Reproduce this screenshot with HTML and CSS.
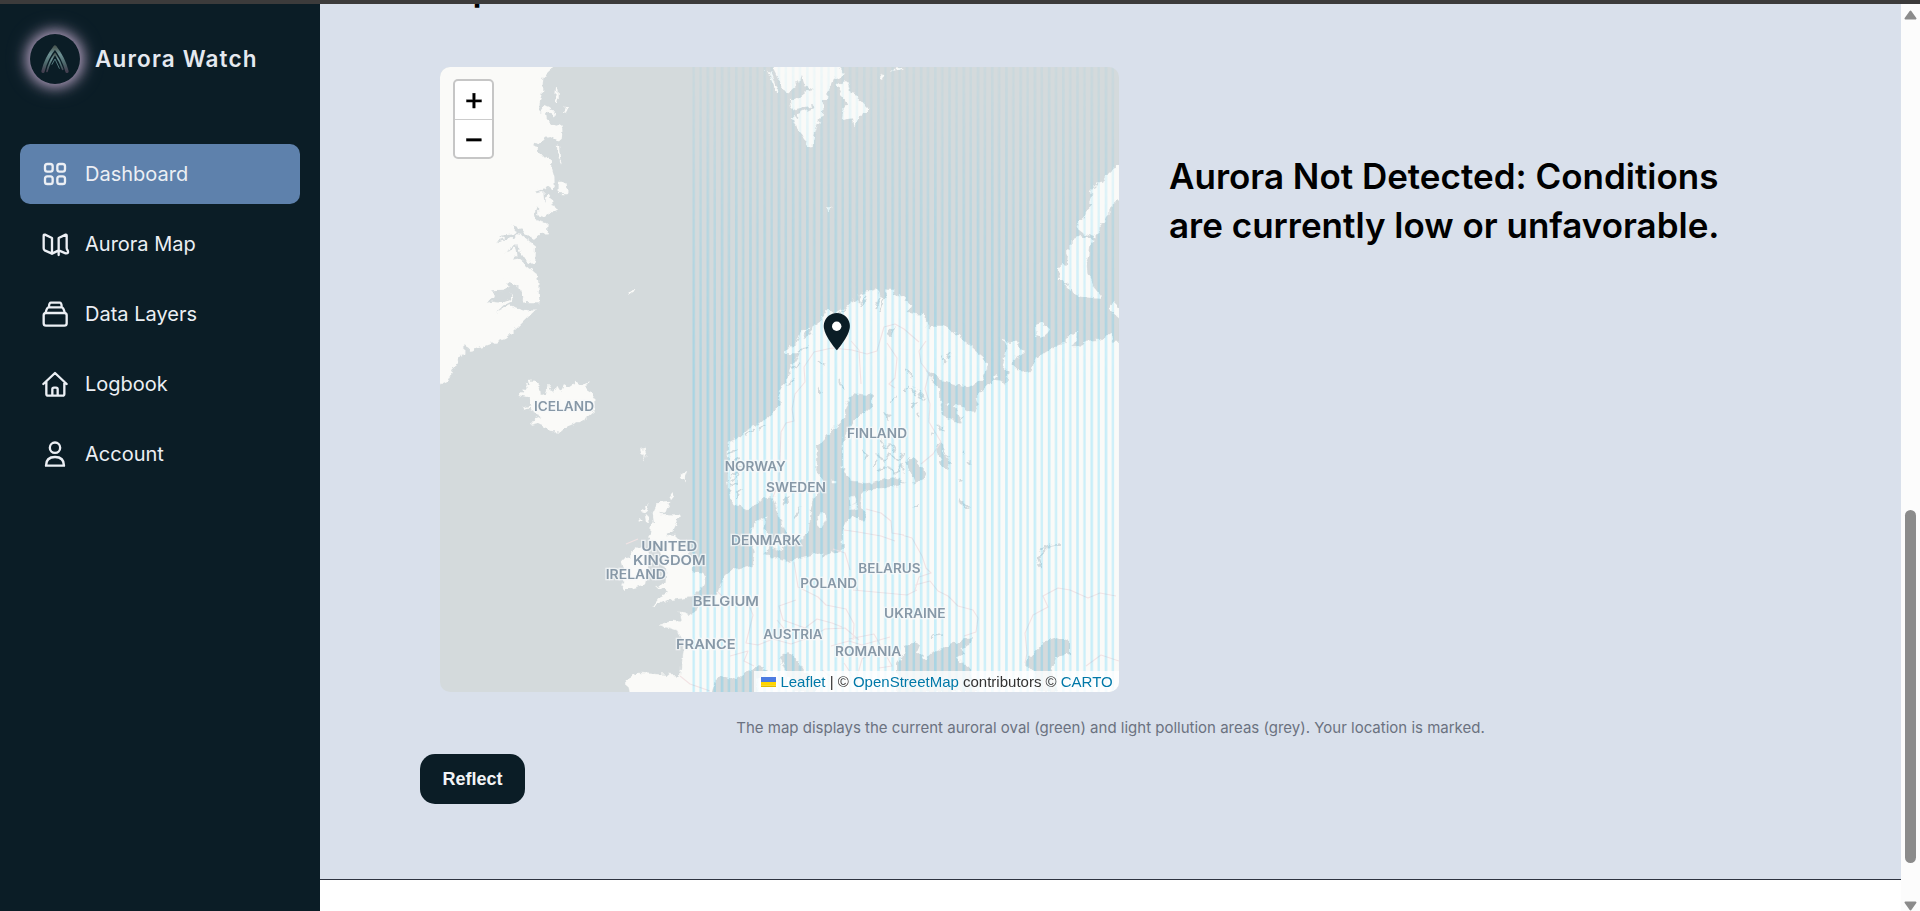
FILE: index.html
```html
<!DOCTYPE html>
<html lang="en">
<head>
<meta charset="utf-8">
<title>Aurora Watch</title>
<link rel="stylesheet" href="styles.css">
</head>
<body>
<div class="topbar"></div>
<div class="app">
  <aside class="sidebar">
    <div class="brand">
      <div class="logo">
        <svg viewBox="0 0 150 150" fill="none" stroke-linecap="round" stroke-linejoin="round">
          <defs><linearGradient id="lg" x1="0" y1="0" x2="0" y2="1"><stop offset="0" stop-color="#4c5a55"/><stop offset=".3" stop-color="#6e9295"/><stop offset=".65" stop-color="#4e6a6c"/><stop offset="1" stop-color="#443f50"/></linearGradient></defs>
          <path d="M39 112Q48 73 75 39Q101 73 111 112" stroke="url(#lg)" stroke-width="10"/>
          <path d="M51 112Q58 84 75 59Q90 82 98 106" stroke="url(#lg)" stroke-width="5"/>
          <path d="M66 91L75 75L88 103" stroke="#53777c" stroke-width="3"/>
        </svg>
      </div>
      <span class="brand-name">Aurora Watch</span>
    </div>
    <nav class="nav">
      <a class="item active"><svg class="icon" viewBox="0 0 90 90"><rect x="15" y="15" width="23" height="23" rx="7"/><rect x="52" y="15" width="23" height="23" rx="7"/><rect x="15" y="52" width="23" height="23" rx="7"/><rect x="52" y="52" width="23" height="23" rx="7"/></svg>Dashboard</a>
      <a class="item"><svg class="icon" viewBox="0 0 90 90"><path d="M15 17L36 27V74L14 64Q11 62 11 58V20Q11 16 15 17ZM36 74L56 64M56 78V27L77 17Q80 16 80 20V57Q80 61 83 64Q87 74 77 73L56 64"/></svg>Aurora Map</a>
      <a class="item"><svg class="icon" viewBox="0 0 90 90"><rect x="11" y="42" width="69" height="38" rx="7"/><path d="M17 41Q20 26 26 25H65Q71 26 74 41M27 25Q27 11 33 11H59Q65 11 65 25"/></svg>Data Layers</a>
      <a class="item"><svg class="icon" viewBox="0 0 90 90"><path d="M10 45L45 12L80 45M19 38V75Q19 80 24 80H68Q73 80 73 75V38M37 80V61Q37 56 42 56H48Q53 56 53 61V80"/></svg>Logbook</a>
      <a class="item"><svg class="icon" viewBox="0 0 90 90"><circle cx="45" cy="26" r="15.500"/><path d="M18 80C18 61 29 54 45 54S72 61 72 80Z"/></svg>Account</a>
    </nav>
  </aside>
  <main class="page">
    <section class="content">
      <h2 class="section-title">Map</h2>
      <div class="row">
        <div class="map">
          <svg class="tiles" viewBox="440 67 679 625">
            <defs>
              <pattern id="st" x="692.3" y="0" width="14.22" height="10" patternUnits="userSpaceOnUse"><rect x="0" width="2.6" height="10" fill="#00bfff" fill-opacity=".2"/><rect x="7.1" width="2.3" height="10" fill="#00bfff" fill-opacity=".19"/></pattern>
              <linearGradient id="fade" x1="0" y1="0" x2="0" y2="1"><stop offset="0" stop-color="#fff" stop-opacity=".22"/><stop offset=".25" stop-color="#fff" stop-opacity=".65"/><stop offset=".5" stop-color="#fff"/></linearGradient>
              <mask id="fm" maskUnits="userSpaceOnUse" x="440" y="67" width="679" height="625"><rect x="440" y="67" width="679" height="625" fill="url(#fade)"/></mask>
              <filter id="coast" filterUnits="userSpaceOnUse" x="425" y="55" width="710" height="650" color-interpolation-filters="sRGB"><feTurbulence type="fractalNoise" baseFrequency=".16" numOctaves="2" seed="4" result="n"/><feDisplacementMap in="SourceGraphic" in2="n" scale="7" xChannelSelector="R" yChannelSelector="G"/></filter>
            </defs>
            <rect x="440" y="67" width="679" height="625" fill="#d4dadc"/>
            <g class="land" filter="url(#coast)">
              <g transform="translate(430 0) scale(.33333)">
                <path d="M0 170H365V201L360 213L350 217L340 235L335 280L325 335L330 338L345 315L360 322L375 340L374 347L360 338L348 342L350 360L370 378L382 380L393 376L397 390L395 420L385 424L362 411L345 413L325 433L310 424L306 435L322 445L330 468L345 470L362 480L364 497L373 530L374 560L368 568L353 556L343 568L330 572L316 574L320 580L340 576L343 606L352 582L362 588L368 612L377 628L372 640L358 638L340 650L322 645L321 618L312 645L315 660L353 670L350 700L330 702L312 716L285 702L270 683L244 674L262 694L255 703L205 707L228 717L201 726L216 726L260 706L280 708L318 740L316 780L312 796L270 765L262 732L222 756L258 742L262 768L250 779L266 776L320 822L324 840L328 907L285 906L272 890L265 860L245 845L208 834L235 842L242 862L218 872L183 874L195 884L170 908L190 905L214 909L244 896L243 880L250 900L222 914L200 935L238 916L285 930L314 932L280 965L240 1005L222 1018L160 1040L120 1050L100 1035L100 1060L75 1100L55 1140L30 1152L0 1160Z"/>
                <path d="M378 262Q384 256 383 300Q380 314 376 300ZM405 320L411 322L405 341L399 340ZM381 435L387 434L391 490L384 480ZM386 550L403 546L406 567L415 572L415 580L386 579ZM594 884L600 870L617 862L618 868Z"/>
              </g>
              <g transform="translate(760 50) scale(.33333)">
                <path d="M38 51L30 25H230L235 51L254 75L218 90L203 125L201 150L192 150L188 200L178 205L160 270L158 291L150 292L125 255L108 235L96 205L105 198L114 210L115 190L160 170L158 165L105 178L93 172L90 150L105 150L135 127L160 120L135 105L125 75L120 100L105 90L108 110L85 130L72 120ZM22 60L30 62L56 128L50 130ZM230 103L262 93L272 130L298 135L296 150L310 165L327 178L310 190L300 210L280 228L276 205L246 210L250 180L262 165ZM361 68L372 84L366 86ZM393 65L410 52L431 58L415 64L408 60ZM199 469H211L207 480H202Z"/>
                <path d="M1110 335L1077 348Q1045 355 1028 398L1015 400L1008 412L990 416L992 430L1000 430L985 462L995 465L980 480L975 500L945 530L970 550L1005 562L1022 538L1020 520L1030 518L1038 500L1048 497L1048 475L1077 450L1110 430ZM960 558L1002 570L990 590L988 615L980 640L982 670L1000 710L1025 740L1023 746L960 740L940 732L925 700L910 690L897 690L894 655L905 645L920 648L924 620L918 605L935 590L935 570ZM912 698L932 712L928 720ZM1048 765L1058 758L1077 778L1100 790V815L1077 805L1045 775ZM845 817L870 838L862 850L845 864L830 858L828 825Z"/>
              </g>
              <g transform="translate(430 340) scale(.33333)">
                <path d="M265 168L280 155L278 145L292 148L285 132L300 135L296 122H315L331 145L332 168L350 165L356 137L370 158L382 138L392 155L402 136L420 145L435 135L436 118L458 134L476 124L465 145L482 155L496 175V212L470 235L445 245L410 260L392 275L360 272L345 262L320 250L302 254L318 235L335 228L305 216L300 205L276 210L275 203L310 195L295 175Z"/>
                <path d="M628 330L652 326L640 345L648 350L632 342ZM640 347L645 362L640 363ZM771 393L765 410L764 430L755 415L752 404ZM716 470L724 457L730 468L720 480ZM655 492L650 510L636 522L645 500ZM644 524L662 542L648 542ZM628 530L635 540L630 546Z"/>
                <path d="M682 490L722 486L715 505L690 522L745 524L749 532L730 570L708 585L735 588L770 625L790 660L788 695L820 702L825 725L815 745L800 760L785 772L740 778L712 780L692 790L668 800L690 770L718 755L676 740L710 725L712 690L700 670L690 630L680 610L655 590L665 575L658 568L672 545L668 520ZM603 635L625 618L655 628L662 660L652 700L645 733L620 740L580 752L568 735L582 728L570 710L582 695L572 660L600 655Z"/>
              </g>
              <path d="M728 453V443L740 437L747 430L763 422L775 410L780 403L779 390L785 385L790 370L800 353L785 353L790 347L797 343L801 332L807 328L803 340L809 335L812 327L820 322L828 308L833 313L847 308L852 300L860 303L859 295L870 292L877 288L880 295L884 300L887 290L893 290L893 294L900 296L912 305L907 313L922 315L927 320L926 326L931 329L932 326H943L953 332L967 343L983 357L987 368L982 380L967 387L955 385L943 381L925 368L930 378L940 388V403L943 415L952 420L960 424L963 418L953 407L957 403L965 410L975 413L979 407L976 397L983 390L993 380L1002 381L1006 387L1008 372L1003 365L1007 350L1006 343L1001 340L1008 342L1017 342L1024 353L1015 357L1012 363L1022 373L1032 371L1034 360L1045 353L1057 345L1065 343L1065 338L1072 335L1078 333L1076 340L1072 346L1082 347L1086 341L1100 340L1112 333L1113 343H1132V702H630L627 679L638 673L680 676L683 657L685 643L677 630L660 625L672 621L682 622L680 612L693 615L697 605L717 595L723 578L733 570L753 565L755 553L750 540L753 525L767 516L765 530L770 535L766 541L768 550L763 553L787 562L800 558L823 552V557L843 550V530L847 520L858 517L865 523L867 510L860 507L862 493L887 488L907 483L893 477L867 483L850 480L843 467V440L853 422L872 405V395L853 393L845 407V417L830 432L817 447L815 470L825 483L812 500L808 533L797 543L790 540L783 527L777 510L773 497L763 498L747 510L732 503L728 480Z"/>
              <path d="M772 540L782 535L786 543L780 551L773 548ZM816 523L821 512L827 517L820 529ZM849 498L855 496L857 502L851 506ZM849 507L858 503L855 511ZM832 480H836V483H832Z"/>
              <circle cx="946.500" cy="404" r="1.500"/><circle cx="996" cy="376" r="1.500"/>
            </g>
            <g class="water" filter="url(#coast)">
              <path d="M713 702V692L716 680L722 676L736 680L745 674L755 667L768 669L756 680L758 692V702ZM780 657L788 652L795 657L803 670L816 680V692H794ZM897 692V664L903 655L905 646L912 643L920 645L917 652L927 660L930 654L942 649L955 643L971 638L969 645L961 648L964 654L956 658L970 668L976 692ZM1025 663L1043 643L1057 638L1070 642L1070 654L1056 657L1052 672L1058 692H1040L1035 674ZM905 462L912 457L927 473L924 480L915 484L911 473ZM936 447L942 443L943 451L951 464L948 470L942 466L938 456ZM931 433L934 431L932 435ZM959 499L966 503L970 508L966 511ZM886 334L896 325L891 336ZM911 386L915 388L914 387ZM916 390L925 397L920 396ZM817 385L823 394L819 393ZM883 413L892 416L887 420ZM781 500L790 497L785 505ZM913 507L918 504V508ZM957 480L963 480L961 482ZM958 500L969 510L968 508ZM793 515L801 505L795 520Z"/>
            </g>
            <g class="streams" filter="url(#coast)">
              <path d="M880 440l6 8 4-5 5 9m-18 3l8 5 4-6 9 6 6-8m-25 18l10-4 5 8 8-9 3 8M862 450l6 5-3 6m7 6l5-6M906 393l3-7m2 3l4 6m3 1l7 4m-35 2l5-5m10-28l8 8m30-19l3 5m-6-7l2 4m5-2l3-5M911 406l8-2m-1 9l2 3M937 425l7 7-2-5m-5 17l8 6 3 7m-8-8l5 9m18-7l2 3m2 8l4 4M1060 544l-10 2-13 12 4 11m-1-19l10-6M930 640l4-5 8-1m-104-318l8-7m14-5l7-8m13 1l-4 11m9-12l-5 15m-63 49l8 6m14 15l5 8M731 463l8-5m-9 18l9-4m-9 14l8-4m21-53l8-5m4-12l9-7M728 455l10-5m-8 20l12-3m-12 15l10-8m-5 24l6-10m5-54l8-4m3-8l10-4M787 385l7-5m-2-12l8-5M798 352l10-6m-4-8l8-5M865 300l-4 8"/>
            </g>
            <g class="borders">
              <path d="M773 497l6-15 2-50 5-9 8-2-2-12 3-15 10-12-1-15 10-15 18-4 20 2 15 4 10-3 7-24 11-3 9 5 15 13m-32 1l10 15-2 20-6 6 6 4m31-47l-7 10 2 12 8 10-4 16 5 15-1 18 12 20-8 12-12 10M851 341l8 9 2 34M866 509l15 4 10 8 1 12 12 2m-60-5l14 2 23 4 14 5m7-6l10 3 10 18 4 12 5 5-12 4-4 13m-57 0l-7-11m2 11l54 5 10-5m-67-20l-5-17-12-4M794 562l4 25 20 10 8 8 20 4 8 15-1 16M796 600l-17 6 4 14 22 8 12-9 15 4 10 4M745 595l8 20-7 28 12 2 15-6 18 5 20-7 14-8 20-1 14 12m-69-4l-13-16m100 30l-15 9-5 18-12 8-15-9-8-6m9-24l18-5 13 4 28-8m-46 26l10 15 5 9m-10-48l25-5 8 14 10 18-13 2M915 585l15-4 8 10 10 5 10 10 15 4 5 8-2 14-12 4M1025 663l2-10-2-20 8-18 15-8-5-11 15-8 12 2 18 8 12-5 16 3m-30 70l15-11 18 6M680 676l10 8 20 7m20-35l18-5-4 10 10 5m-30-68l-6-6m-92-48l12-5"/>
            </g>
            <rect x="692.300" y="67" width="426.700" height="625" fill="url(#st)" mask="url(#fm)"/>
            <g class="labels">
              <text x="534" y="411" textLength="60" lengthAdjust="spacingAndGlyphs">ICELAND</text><text x="724.700" y="471" textLength="61" lengthAdjust="spacingAndGlyphs">NORWAY</text><text x="766" y="492.300" textLength="60" lengthAdjust="spacingAndGlyphs">SWEDEN</text><text x="847" y="438.300" textLength="60" lengthAdjust="spacingAndGlyphs">FINLAND</text><text class="big" x="641.300" y="550.700" textLength="56" lengthAdjust="spacingAndGlyphs">UNITED</text><text class="big" x="633" y="565" textLength="72.700" lengthAdjust="spacingAndGlyphs">KINGDOM</text><text x="605.700" y="579.300" textLength="60.300" lengthAdjust="spacingAndGlyphs">IRELAND</text><text x="731" y="545.300" textLength="70" lengthAdjust="spacingAndGlyphs">DENMARK</text><text x="858.300" y="573.300" textLength="62.300" lengthAdjust="spacingAndGlyphs">BELARUS</text><text x="800.300" y="587.700" textLength="56.700" lengthAdjust="spacingAndGlyphs">POLAND</text><text class="big" x="692.700" y="606" textLength="66.300" lengthAdjust="spacingAndGlyphs">BELGIUM</text><text x="884" y="618" textLength="61.700" lengthAdjust="spacingAndGlyphs">UKRAINE</text><text x="763.300" y="639" textLength="59.300" lengthAdjust="spacingAndGlyphs">AUSTRIA</text><text class="big" x="676" y="649.300" textLength="59.700" lengthAdjust="spacingAndGlyphs">FRANCE</text><text x="835" y="655.700" textLength="66.300" lengthAdjust="spacingAndGlyphs">ROMANIA</text>
            </g>
            <path transform="translate(814.400 309.300) scale(1.868)" fill="#0b1d26" d="M12 2C8.130 2 5 5.130 5 9c0 5.250 7 13 7 13s7-7.750 7-13c0-3.870-3.130-7-7-7z"/>
            <circle cx="836.700" cy="326.300" r="4.700" fill="#fff"/>
          </svg>
          <div class="zoom"><a class="zoom-btn">+</a><a class="zoom-btn">−</a></div>
          <div class="attribution"><svg class="flag" viewBox="0 0 12 8"><path fill="#4C7BE1" d="M0 0h12v4H0z"/><path fill="#FFD500" d="M0 4h12v3H0z"/><path fill="#E0BC00" d="M0 7h12v1H0z"/></svg><a>Leaflet</a> | © <a>OpenStreetMap</a> contributors © <a>CARTO</a></div>
        </div>
        <h3 class="status">Aurora Not Detected: Conditions<br>are currently low or unfavorable.</h3>
      </div>
      <p class="caption">The map displays the current auroral oval (green) and light pollution areas (grey). Your location is marked.</p>
      <button class="reflect">Reflect</button>
    </section>
  </main>
  <div class="scrollbar">
    <svg class="arrow" viewBox="0 0 13 10"><path d="M6.500 1.500L11.500 8.500H1.500Z"/></svg>
    <div class="thumb"></div>
    <svg class="arrow down" viewBox="0 0 13 10"><path d="M6.500 8.500L11.500 1.500H1.500Z"/></svg>
  </div>
</div>
</body>
</html>
```
FILE: styles.css
```css
* { box-sizing: border-box; }
body { margin: 0; height: 911px; overflow: hidden; background: #fff; font-family: Inter, sans-serif; }
.topbar { height: 4px; background: #3c3b3b; }
.app { display: flex; height: 907px; }

.sidebar { width: 320px; flex: none; background: #0b1d26; padding: 30px 20px; }
.brand { display: flex; align-items: center; gap: 15px; padding-left: 10px; height: 50px; }
.logo { width: 50px; height: 50px; border-radius: 50%; background: #0b1d26; box-shadow: 0 0 13px 3px rgba(205, 180, 215, .8), 0 0 25px rgba(205, 180, 215, .4); }
.logo svg { display: block; width: 50px; height: 50px; }
.brand-name { color: #e5e9f0; font-size: 22.5px; line-height: 30px; padding-bottom: 1px; font-weight: 600; letter-spacing: 1.15px; }
.nav { display: flex; flex-direction: column; gap: 10px; margin-top: 60px; }
.item { display: flex; align-items: center; gap: 15px; height: 60px; padding: 0 20px; border-radius: 10px; color: #eceff4; font-size: 20px; }
.active { background: #5e81ac; }
.icon { width: 30px; height: 30px; fill: none; stroke: #eceff4; stroke-width: 7; stroke-linejoin: round; stroke-linecap: round; }

.page { flex: 1; min-width: 0; background: #fff; }
.content { height: 876px; overflow: hidden; background: #d9e0eb; border-bottom: 1px solid #2e3440; padding: 0 100px; }
.section-title { margin: -40px 0 54px; font-size: 35px; line-height: 49px; font-weight: 600; color: #000; }
.row { display: flex; gap: 50px; padding-left: 20px; }
.map { position: relative; flex: none; width: 679px; height: 625px; border-radius: 10px; overflow: hidden; }
.tiles { display: block; width: 679px; height: 625px; }
.land { fill: #fafaf8; stroke: #fafaf8; stroke-width: .5; stroke-linejoin: round; }
.water { fill: #d4dadc; }
.streams { fill: none; stroke: #d4dadc; stroke-width: 1.6; }
.borders { fill: none; stroke: #f2e3e4; stroke-width: 1.1; stroke-linejoin: round; }
.labels { font: 600 12.5px Inter, sans-serif; fill: #8798a7; stroke: #f5f8f9; stroke-opacity: .75; stroke-width: 2.5px; paint-order: stroke; }
.big { font-size: 13.5px; }
.zoom { position: absolute; left: 13px; top: 12px; width: 41px; height: 80px; border: 2px solid #c6c6c6; border-radius: 5px; background: #fff; overflow: hidden; }
.zoom-btn { display: block; height: 38px; text-align: center; color: #000; font: 29px/38px "DejaVu Sans Mono", monospace; -webkit-text-stroke: .4px #000; padding-left: 1px; }
.zoom-btn:first-child { height: 39px; border-bottom: 1px solid #ccc; }
.attribution { position: absolute; right: 0; bottom: 0; height: 21px; padding: 0 6.25px 0 7px; background: rgba(255, 255, 255, .8); color: #333; font: 15px/21px "Liberation Sans", sans-serif; white-space: nowrap; }
.attribution a { color: #0078a8; }
.flag { width: 15px; height: 10px; margin-right: 4px; }
.status { margin: 85px 0 0; font-size: 35px; line-height: 49px; font-weight: 600; color: #000; white-space: nowrap; }
.caption { margin: 25px 0 0; height: 22px; line-height: 22px; text-align: center; font-size: 15px; color: #6b7280; white-space: nowrap; }
.reflect { display: block; margin-top: 15px; width: 105px; height: 50px; padding: 0; border: 0; border-radius: 15px; background: #0b1d26; color: #f3f4f6; font: bold 18px "Liberation Sans", sans-serif; }

.scrollbar { flex: none; width: 19px; background: #fcfcfc; padding: 6px 3px 0; display: flex; flex-direction: column; }
.arrow { display: block; width: 13px; height: 10px; fill: #8b8b8b; stroke: #8b8b8b; stroke-width: 2; stroke-linejoin: round; }
.thumb { width: 11px; height: 353px; margin: 490px 0 0 1px; border-radius: 6px; background: #8b8b8b; }
.down { margin-top: auto; }
```
